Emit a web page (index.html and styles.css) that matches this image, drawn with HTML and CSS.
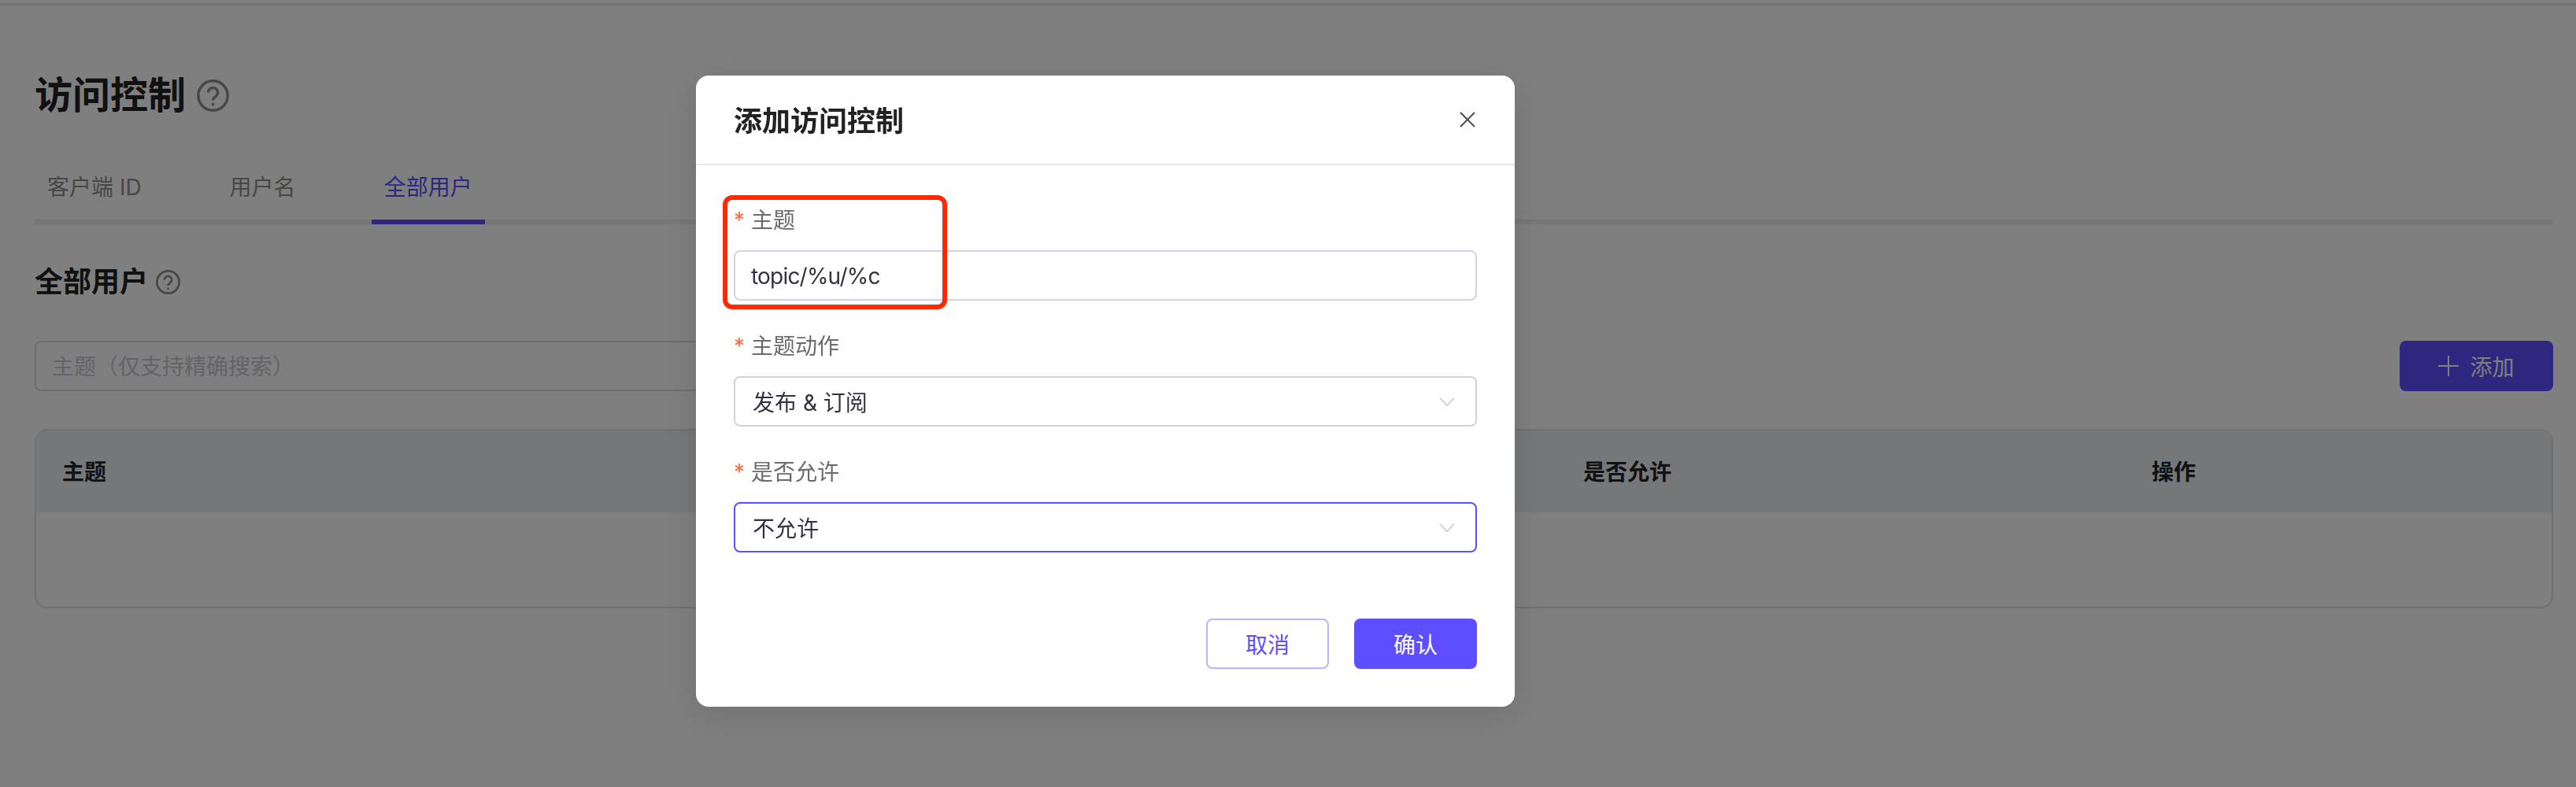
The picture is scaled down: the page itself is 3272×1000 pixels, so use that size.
FILE: index.html
```html
<!DOCTYPE html>
<html lang="zh-CN">
<head>
	<title>访问控制</title>
	<link rel="stylesheet" href="styles.css">
</head>
<body>
	<div class="topbar"></div>

	<main class="page">
		<h1 class="page-title">访问控制
			<svg class="help help-lg" viewBox="0 0 41 41"><circle cx="20.5" cy="20.5" r="18.7"/><path d="M14.5 16.5a6 6 0 1 1 9.6 4.8c-2.2 1.6-3.6 2.700-3.600 5.200"/><circle class="dot" cx="20.500" cy="31.500" r="1.900"/></svg>
		</h1>

		<div class="tabs">
			<a class="tab">客户端 ID</a>
			<a class="tab">用户名</a>
			<a class="tab active">全部用户</a>
		</div>

		<h2 class="section-title">全部用户
			<svg class="help help-sm" viewBox="0 0 41 41"><circle cx="20.5" cy="20.5" r="18.7"/><path d="M14.5 16.5a6 6 0 1 1 9.6 4.8c-2.2 1.6-3.6 2.700-3.600 5.200"/><circle class="dot" cx="20.500" cy="31.500" r="1.900"/></svg>
		</h2>

		<div class="toolbar">
			<input class="search" type="text" placeholder="主题（仅支持精确搜索）">
			<button class="add-btn">
				<svg class="plus" viewBox="0 0 26 26"><path d="M0 13h26M13 0v26"/></svg>
				添加
			</button>
		</div>

		<div class="table">
			<div class="table-head">
				<div>主题</div>
				<div>是否允许</div>
				<div>操作</div>
			</div>
			<div class="table-body"></div>
		</div>
	</main>

	<div class="overlay">
		<div class="dialog">
			<div class="dialog-head">
				<span class="dialog-title">添加访问控制</span>
				<svg class="close" viewBox="0 0 20 20"><path d="M1 1l18 18M19 1L1 19"/></svg>
			</div>

			<form class="dialog-form">
				<div class="field">
					<label class="field-label"><span class="star">*</span>主题</label>
					<input class="control topic-input" type="text" value="topic/%u/%c">
				</div>
				<div class="field">
					<label class="field-label"><span class="star">*</span>主题动作</label>
					<div class="control select">发布 &amp; 订阅
						<svg class="arrow" viewBox="0 0 20 11"><path d="M1 .5l9 10 9-10"/></svg>
					</div>
				</div>
				<div class="field">
					<label class="field-label"><span class="star">*</span>是否允许</label>
					<div class="control select focused">不允许
						<svg class="arrow" viewBox="0 0 20 11"><path d="M1 .5l9 10 9-10"/></svg>
					</div>
				</div>
			</form>

			<div class="dialog-foot">
				<button class="btn btn-plain">取消</button>
				<button class="btn btn-primary">确认</button>
			</div>

			<div class="callout"></div>
		</div>
	</div>
</body>
</html>
```

FILE: styles.css
```css
html, body {
	margin: 0;
	background: #fff;
}

body {
	font-family: Inter, "Noto Sans CJK SC", sans-serif;
	font-size: 28px;
	color: #222;
}

.topbar {
	height: 4px;
	border-bottom: 3px solid #e8e8ea;
	margin-bottom: 1px;
}

.page {
	padding: 0 29px 0 44px;
}

.page-title {
	display: flex;
	align-items: center;
	gap: 14px;
	margin: 90px 0 0;
	font-size: 48px;
	line-height: 48px;
	font-weight: 700;
}

.help {
	fill: none;
	stroke: #8e8e8e;
}

.help .dot {
	fill: #8e8e8e;
	stroke: none;
}

.help-lg {
	width: 41px;
	height: 41px;
	stroke-width: 3.4;
}

.help-sm {
	width: 31px;
	height: 31px;
	stroke-width: 3.6;
}

.tabs {
	display: flex;
	gap: 80px;
	margin-top: 73px;
	border-bottom: 6px solid #eceef3;
}

.tab {
	padding: 0 16px 21px;
	line-height: 40px;
	color: #8e8e8e;
}

.tab.active {
	color: #5d4eff;
	border-bottom: 6px solid #5d4eff;
	margin-bottom: -6px;
}

.section-title {
	display: flex;
	align-items: center;
	gap: 10px;
	margin: 49px 0 0;
	font-size: 36px;
	line-height: 48px;
	font-weight: 700;
}

.toolbar {
	display: flex;
	justify-content: space-between;
	margin-top: 51px;
}

.search {
	width: 1000px;
	height: 64px;
	box-sizing: border-box;
	padding: 2px 20px 0;
	border: 2px solid #dadce6;
	border-radius: 8px;
	font: inherit;
	background: #fff;
}

.search::placeholder {
	color: #c6c8d2;
}

.add-btn {
	display: flex;
	align-items: center;
	justify-content: center;
	gap: 14px;
	width: 195px;
	height: 64px;
	border: 0;
	border-radius: 8px;
	background: #5d4eff;
	color: #fff;
	font: inherit;
}

.plus {
	width: 26px;
	height: 26px;
	fill: none;
	stroke: #fff;
	stroke-width: 2;
}

.table {
	margin-top: 48px;
	border: 2px solid #e0e0e2;
	border-radius: 16px;
	overflow: hidden;
}

.table-head {
	display: grid;
	grid-template-columns: 1932px 722px 1fr;
	align-items: center;
	height: 104px;
	box-sizing: border-box;
	padding: 0 33px 2px;
	background: #eceef2;
	font-weight: 700;
}

.table-body {
	height: 120px;
}

.overlay {
	position: fixed;
	inset: 0;
	display: flex;
	align-items: flex-start;
	padding: 96px 0 0 884px;
	background: rgba(0, 0, 0, .5);
}

.dialog {
	position: relative;
	display: flex;
	flex-direction: column;
	width: 1040px;
	height: 802px;
	box-sizing: border-box;
	border-radius: 16px;
	background: #fff;
	box-shadow: 0 12px 48px rgba(0, 0, 0, .12);
}

.dialog-head {
	display: flex;
	align-items: center;
	justify-content: space-between;
	height: 112px;
	padding: 0 50px 0 48px;
	border-bottom: 2px solid #e4e7ec;
}

.dialog-title {
	margin-top: -2px;
	font-size: 36px;
	font-weight: 700;
	color: #222;
}

.close {
	width: 20px;
	height: 20px;
	fill: none;
	stroke: #4a4c5c;
	stroke-width: 2;
}

.dialog-form {
	display: flex;
	flex-direction: column;
	gap: 38px;
	padding: 50px 48px 0;
}

.field {
	display: flex;
	flex-direction: column;
	gap: 18px;
}

.field-label {
	display: flex;
	line-height: 40px;
	color: #6b6b6b;
}

.star {
	width: 22px;
	color: #ff6a3d;
}

.control {
	display: flex;
	align-items: center;
	justify-content: space-between;
	height: 64px;
	box-sizing: border-box;
	padding: 0 26px 0 22px;
	border: 2px solid #d1d5de;
	border-radius: 8px;
	font: inherit;
	color: #303244;
}

.topic-input {
	padding: 2px 20px 0;
	letter-spacing: -.8px;
}

.select {
	border-color: #d3d3d3;
}

.select.focused {
	border-color: #5d4eff;
}

.arrow {
	width: 20px;
	height: 11px;
	fill: none;
	stroke: #c2c8d4;
	stroke-width: 1.5;
}

.dialog-foot {
	display: flex;
	justify-content: flex-end;
	gap: 32px;
	margin-top: auto;
	padding: 0 48px 48px;
}

.btn {
	width: 156px;
	height: 64px;
	box-sizing: border-box;
	border-radius: 8px;
	font: inherit;
}

.btn-plain {
	border: 2px solid #bab4ff;
	background: #fff;
	color: #5d4eff;
}

.btn-primary {
	border: 0;
	background: #5d4eff;
	color: #fff;
}

.callout {
	position: absolute;
	top: 152px;
	left: 34px;
	width: 285px;
	height: 145px;
	box-sizing: border-box;
	border: 6px solid #ff2a04;
	border-radius: 12px;
}
```
